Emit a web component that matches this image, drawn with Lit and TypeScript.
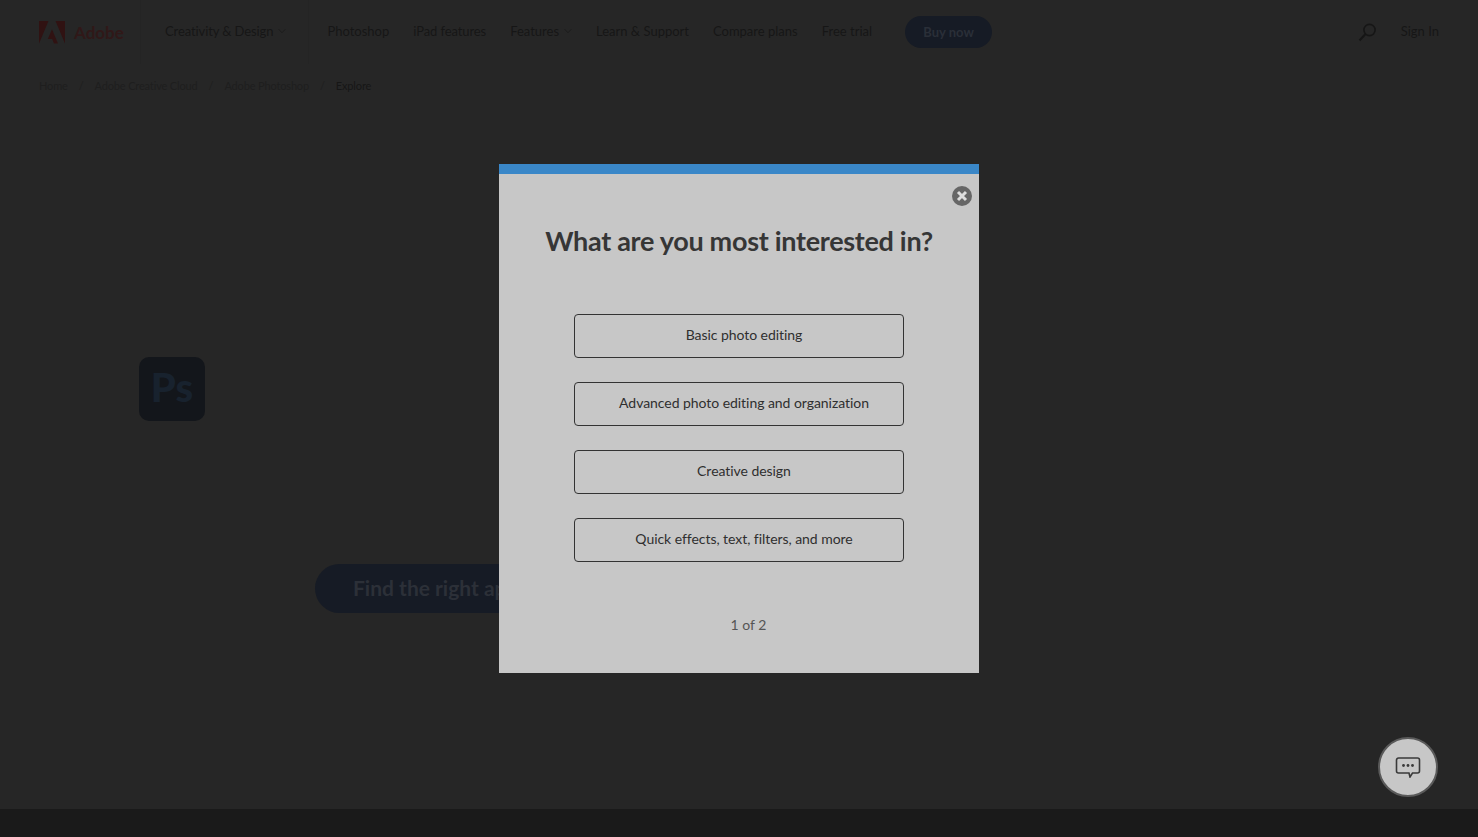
import { LitElement, html, css } from "lit";
import { customElement } from "lit/decorators.js";

@customElement("app-root")
export class AppRoot extends LitElement {
  static styles = css`
    :host { display: block; font-family: "Lato", "Noto Sans", sans-serif; color: #161616; }
    * { box-sizing: border-box; }
    .page { height: 837px; background: #262626; display: flex; flex-direction: column; overflow: hidden; position: relative; }
    .nav { height: 64px; display: flex; align-items: stretch; padding-left: 39px; font-size: 13px; flex: none; }
    .brand { display: flex; align-items: center; gap: 9px; width: 101px; color: #301818; font-size: 17px; font-weight: 700; }
    .sep { width: 1px; background: #242424; }
    .menu { display: flex; align-items: center; }
    .cat { padding: 0 22px 0 24px; }
    .links { padding-left: 18px; gap: 24px; }
    .item { display: flex; align-items: center; gap: 5px; white-space: nowrap; position: relative; top: -1px; }
    .item.tight { letter-spacing: -0.1px; }
    .buy { margin-left: 9px; height: 32px; width: 87px; border-radius: 16px; background: #161b25; color: #2a2f38; font-weight: 700; display: flex; align-items: center; justify-content: center; }
    .right { margin-left: auto; display: flex; align-items: center; gap: 24px; padding-right: 39px; }
    .crumbs { flex: none; display: flex; align-items: center; gap: 11px; padding: 12px 0 0 39px; height: 30px; font-size: 11px; letter-spacing: -0.15px; color: #1e1e1e; }
    .crumbs .cur { color: #161616; }
    .hero { flex: 1; position: relative; display: flex; flex-direction: column; padding: 263px 0 0 139px; }
    .tile { width: 66px; height: 64px; border-radius: 10px; background: #13161b; color: #18222e; font-size: 40px; font-weight: 900; display: flex; align-items: center; justify-content: center; padding-bottom: 5px; }
    .cta { margin: 143px 0 0 176px; width: 420px; height: 49px; border-radius: 25px; background: #161b25; color: #2c3038; font-size: 21px; font-weight: 700; display: flex; align-items: center; padding: 0 0 2px 38px; white-space: nowrap; }
    .foot { flex: none; height: 28px; background: #1a1a1a; }
    .scrim { position: absolute; inset: 0; display: flex; align-items: center; justify-content: center; }
    .modal { position: relative; width: 480px; height: 509px; background: #c7c7c7; border-top: 10px solid #3a87c8; display: flex; flex-direction: column; align-items: center; color: #2f2f2f; }
    .close { position: absolute; top: 12px; right: 7px; width: 20px; height: 20px; display: block; }
    h1 { margin: 48px 0 0; font-size: 27px; line-height: 38px; font-weight: 700; color: #363636; white-space: nowrap; letter-spacing: -0.3px; }
    .opts { margin-top: 54px; display: flex; flex-direction: column; gap: 24px; }
    .opt { width: 330px; height: 44px; border: 1px solid #333; border-radius: 4px; font-size: 14px; letter-spacing: -0.05px; display: flex; align-items: center; justify-content: center; padding: 0 0 4px 10px; }
    .step { margin-top: 52px; padding-left: 19px; font-size: 14px; color: #555; line-height: 22px; }
    .chat { position: absolute; left: 1378px; top: 737px; width: 60px; height: 60px; border-radius: 50%; background: #c7c7c7; border: 2px solid #5a5a5a; display: flex; align-items: center; justify-content: center; }
  `;

  render() {
    const chev = html`<svg width="8" height="6" viewBox="0 0 8 6" fill="none" stroke="#1c1c1c" stroke-width="1"><path d="M.7 1.200 4 4.800l3.300-3.600"/></svg>`;
    return html`
      <div class="page">
        <header class="nav">
          <div class="brand">
            <svg width="26" height="23" viewBox="0 0 26 23">
              <path fill="#301212" d="M0 0h9.500L0 22.500zM16.500 0H26v22.500zM13 8.300l6 14.200h-4l-1.800-4.600H8.800z"/>
            </svg>
            <span>Adobe</span>
          </div>
          <div class="sep"></div>
          <div class="menu cat"><span class="item tight">Creativity &amp; Design ${chev}</span></div>
          <div class="sep"></div>
          <nav class="menu links">
            <span class="item">Photoshop</span>
            <span class="item tight">iPad features</span>
            <span class="item">Features ${chev}</span>
            <span class="item">Learn &amp; Support</span>
            <span class="item">Compare plans</span>
            <span class="item">Free trial</span>
            <span class="buy">Buy now</span>
          </nav>
          <div class="right">
            <svg width="19" height="19" viewBox="0 0 19 19" fill="none" stroke="#161616" stroke-width="1.6"><circle cx="11.500" cy="7" r="5.600"/><path d="M7.500 11 1.500 17.500" stroke-width="2.200"/></svg>
            <span class="item">Sign In</span>
          </div>
        </header>
        <div class="crumbs">
          <span>Home</span><span>/</span><span>Adobe Creative Cloud</span><span>/</span><span>Adobe Photoshop</span><span>/</span><span class="cur">Explore</span>
        </div>
        <main class="hero">
          <div class="tile">Ps</div>
          <div class="cta">Find the right app</div>
        </main>
        <div class="foot"></div>
        <div class="scrim">
          <section class="modal">
            <svg class="close" viewBox="0 0 20 20">
              <circle cx="10" cy="10" r="10" fill="#666"/>
              <path d="M6 6l8 8M14 6l-8 8" stroke="#ddd" stroke-width="3"/>
            </svg>
            <h1>What are you most interested in?</h1>
            <div class="opts">
              <div class="opt">Basic photo editing</div>
              <div class="opt">Advanced photo editing and organization</div>
              <div class="opt">Creative design</div>
              <div class="opt">Quick effects, text, filters, and more</div>
            </div>
            <div class="step">1 of 2</div>
          </section>
        </div>
        <div class="chat">
          <svg width="26" height="22" viewBox="0 0 26 22" fill="none">
            <path d="M3.500 2h19a2 2 0 0 1 2 2v11a2 2 0 0 1-2 2H17.500l-2.500 4-1-4H3.500a2 2 0 0 1-2-2V4a2 2 0 0 1 2-2z" stroke="#3a3a3a" stroke-width="1.600"/>
            <circle cx="8.500" cy="9.500" r="1.400" fill="#3a3a3a"/><circle cx="13" cy="9.500" r="1.400" fill="#3a3a3a"/><circle cx="17.500" cy="9.500" r="1.400" fill="#3a3a3a"/>
          </svg>
        </div>
      </div>
    `;
  }
}
